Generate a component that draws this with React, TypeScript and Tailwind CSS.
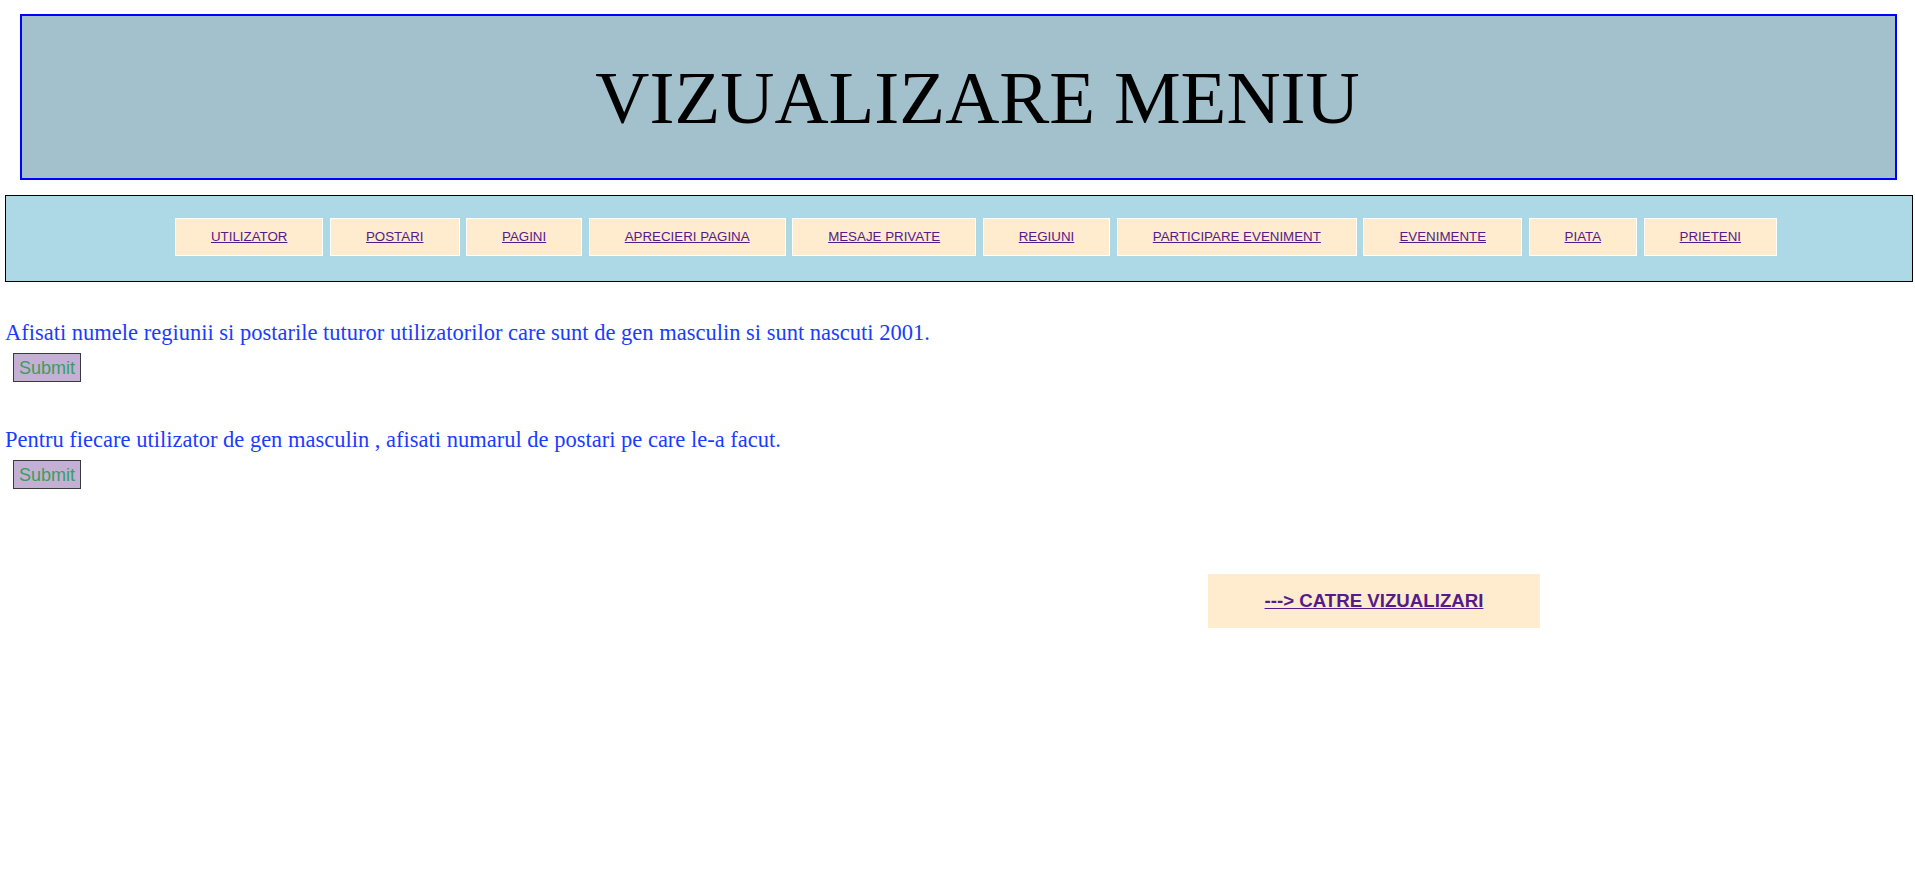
const MENU = [
  "UTILIZATOR",
  "POSTARI",
  "PAGINI",
  "APRECIERI PAGINA",
  "MESAJE PRIVATE",
  "REGIUNI",
  "PARTICIPARE EVENIMENT",
  "EVENIMENTE",
  "PIATA",
  "PRIETENI",
];

const QUERIES = [
  "Afisati numele regiunii si postarile tuturor utilizatorilor care sunt de gen masculin si sunt nascuti 2001.",
  "Pentru fiecare utilizator de gen masculin , afisati numarul de postari pe care le-a facut.",
];

function Query({ text, first }: { text: string; first: boolean }) {
  return (
    <form className={first ? "mt-[38px]" : "mt-[45px]"} onSubmit={(e) => e.preventDefault()}>
      <p className="pl-[5px] font-['Liberation_Serif',serif] text-[22.5px] leading-[26px] text-[#1a3cff]">{text}</p>
      <button
        type="submit"
        className="mt-[7px] ml-[13px] h-[29px] w-[68px] border border-[#3a3a3a] bg-[#c4b0d5] font-['Liberation_Sans',Arial,sans-serif] text-[18px] leading-none text-[#3a9d5d]"
      >
        Submit
      </button>
    </form>
  );
}

export default function App() {
  return (
    <div className="min-h-screen bg-white pt-[14px] font-['Liberation_Sans',Arial,sans-serif]">
      {/* titlu */}
      <header className="ml-[20px] mr-[18px] border-2 border-[#0000ff] bg-[#a2c1cc] pt-[40px] pb-[39px] pl-[38px] text-center">
        <h1 className="font-['Liberation_Serif',serif] text-[75px] leading-[83px] font-normal text-black">
          VIZUALIZARE MENIU
        </h1>
      </header>

      {/* meniu */}
      <nav className="mt-[15px] ml-[5px] mr-[2px] border border-black bg-[#add8e6] pt-[22px] pb-[25px] pl-[34px]">
        <ul className="flex justify-center gap-[6.5px]">
          {MENU.map((m) => (
            <li key={m} className="border border-white bg-[#ffebcd] px-[35px] py-[10px] text-[13.33px] leading-[16px]">
              <a href="#" className="text-[#551a8b] underline">{m}</a>
            </li>
          ))}
        </ul>
      </nav>

      {QUERIES.map((q, i) => (
        <Query key={i} text={q} first={i === 0} />
      ))}

      <div className="mt-[85px] ml-[1208px] flex h-[54px] w-[332px] items-center justify-center bg-[#ffebcd]">
        <a href="#" className="text-[18.67px] font-bold text-[#551a8b] underline">---&gt; CATRE VIZUALIZARI</a>
      </div>
    </div>
  );
}
